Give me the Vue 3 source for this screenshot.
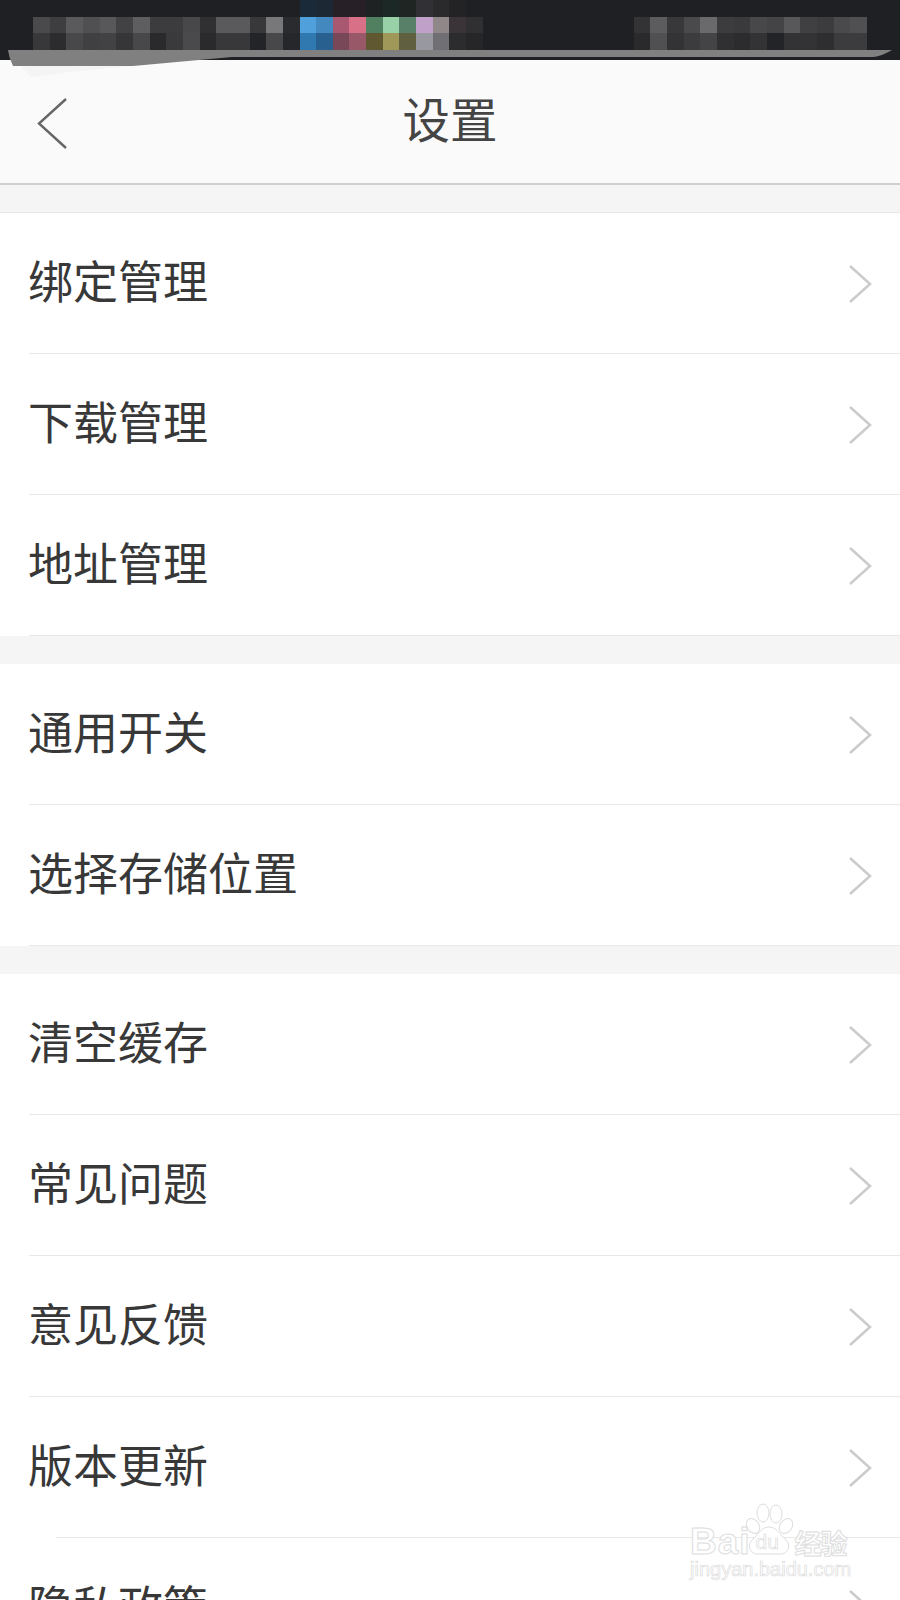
<template>
  <div class="page">
    <div class="status">
      <div class="mosaic left">
        <div v-for="(row, i) in leftBlocks" :key="i" class="mosaic-row">
          <i v-for="(c, j) in row" :key="j" :style="{ background: c }"></i>
        </div>
      </div>
      <div class="mosaic right">
        <div v-for="(row, i) in rightBlocks" :key="i" class="mosaic-row">
          <i v-for="(c, j) in row" :key="j" :style="{ background: c }"></i>
        </div>
      </div>
    </div>

    <header class="header">
      <svg class="back" width="34" height="56" viewBox="0 0 34 56">
        <path d="M30 3 L3 27.5 L30 52" fill="none" stroke="#666" stroke-width="2.4" />
      </svg>
      <h1>设置</h1>
    </header>

    <section v-for="(group, g) in groups" :key="g" class="group">
      <div v-for="item in group" :key="item" class="row" :class="{ short: item === '版本更新' }">
        <span>{{ item }}</span>
        <svg class="arrow" width="26" height="42" viewBox="0 0 26 42">
          <path d="M3 3 L23 21 L3 39" fill="none" stroke="#ccc" stroke-width="2.6" />
        </svg>
      </div>
    </section>

    <!-- torn edge of the screenshot, lies over status bar and header -->
    <svg class="torn" width="900" height="80" viewBox="0 0 900 80">
      <path d="M20 66 L133 66 L70 72 L32 77 Z" fill="#f4f4f4" />
      <path d="M8 50 L892 50 Q880 57 873 57 L232 57 L133 66 L13 66 Q9 58 8 50 Z" fill="#808080" />
    </svg>

    <div class="watermark">
      <svg class="paw" width="50" height="52" viewBox="0 0 50 52">
        <g fill="#fff" stroke="#ddd" stroke-width="1">
          <ellipse cx="9" cy="23" rx="6" ry="8" transform="rotate(-35 9 23)" />
          <ellipse cx="19" cy="10" rx="6" ry="9" />
          <ellipse cx="32" cy="11" rx="6" ry="9" />
          <ellipse cx="42" cy="23" rx="6" ry="8" transform="rotate(35 42 23)" />
          <path d="M25 24 C17 24 14 32 8 37 C2 43 7 52 15 51 L35 51 C43 52 48 43 42 37 C36 32 33 24 25 24 Z" />
        </g>
      </svg>
      <div class="mark-line">
        <span class="bai">Bai</span><span class="du">du</span><span class="jy">经验</span>
      </div>
      <div class="mark-url">jingyan.baidu.com</div>
    </div>
  </div>
</template>

<script setup>
const groups = [
  ['绑定管理', '下载管理', '地址管理'],
  ['通用开关', '选择存储位置'],
  ['清空缓存', '常见问题', '意见反馈', '版本更新', '隐私政策']
]

const base = '#1f2023'

const leftBlocks = [
  [base, base, base, base, base, base, base, base, base, base, base, base, base, base, base, base, '#1a2a38', '#1c2934', '#272026', '#272026', '#1e2222', '#1c2825', '#1e2523', '#313034', '#2a2a2c', '#232325', base],
  ['#4a4a4c', '#3e3e40', '#5a5a5c', '#505052', '#58585a', '#424244', '#5e5e60', '#3c3c3e', '#3c3c3e', '#48484a', '#303033', '#5a5a5c', '#5a5a5c', '#38383a', '#78787a', '#2a2b2f', '#50a0dc', '#4488c0', '#a85870', '#d87088', '#508060', '#98d0a8', '#588068', '#c0a0c8', '#908888', '#3a3438', '#302f32'],
  ['#38383a', '#2c2c2f', '#48484a', '#404042', '#424244', '#363638', '#48484a', '#2a2a2d', '#3a3a3c', '#4a4a4c', '#2a2a2d', '#38383a', '#38383a', '#232427', '#48484a', '#26272b', '#3078b0', '#28608f', '#784858', '#985868', '#605830', '#a09858', '#606040', '#9898a0', '#707074', '#2c2b2e', '#262629']
]

const rightBlocks = [
  [base, base, base, base, base, base, base, base, base, base, base, base, base, base],
  ['#333336', '#5c5c5e', '#38383a', '#4a4a4c', '#6a6a6c', '#3c3c3e', '#3a3a3c', '#48484a', '#444446', '#58585a', '#404042', '#3c3c3e', '#4a4a4c', '#505052'],
  ['#2a2a2d', '#505052', '#333336', '#3c3c3e', '#444446', '#303033', '#2c2c2f', '#333336', '#232427', '#333336', '#333336', '#2e2e30', '#3c3c3e', '#3c3c3e']
]
</script>

<style scoped>
.page {
  position: relative;
  height: 1600px;
  overflow: hidden;
  background: #f5f5f5;
  font-family: "Noto Sans CJK SC", "Liberation Sans", sans-serif;
}

.status {
  height: 60px;
  box-sizing: border-box;
  padding: 0 33px;
  display: flex;
  justify-content: space-between;
  background: #1f2023;
}

.mosaic-row {
  display: flex;
}

.mosaic-row i {
  display: block;
  width: 16.67px;
  height: 16.67px;
}

.header {
  position: relative;
  height: 125px;
  box-sizing: border-box;
  display: flex;
  align-items: center;
  justify-content: center;
  background: #fafafa;
  border-bottom: 2px solid #cfcfcf;
}

.header h1 {
  margin: 0 0 9px;
  font-size: 47.5px;
  font-weight: 400;
  color: #444;
}

.back {
  position: absolute;
  left: 36px;
  top: 36px;
}

.group {
  margin-top: 28px;
  background: #fff;
}

.group:nth-of-type(1) {
  margin-top: 27px;
  border-top: 1px solid #e8e8e8;
}

.row {
  position: relative;
  height: 141px;
  box-sizing: border-box;
  display: flex;
  align-items: center;
  justify-content: space-between;
  padding: 0 27px 0 28px;
  font-size: 45px;
  color: #383838;
}

.row span {
  margin-top: -8px;
}

.row::after {
  content: "";
  position: absolute;
  left: 29px;
  right: 0;
  bottom: 0;
  height: 1px;
  background: #e8e8e8;
}

.row.short::after {
  left: 56px;
}

.torn {
  position: absolute;
  left: 0;
  top: 0;
}

.watermark {
  position: absolute;
  left: 690px;
  top: 1503px;
  width: 170px;
  color: #fff;
}

.paw {
  position: absolute;
  left: 54px;
  top: 0;
}

.mark-line {
  position: relative;
  display: flex;
  align-items: center;
  height: 34px;
  margin-top: 22px;
  -webkit-text-stroke: 1px #ddd;
}

.bai {
  font-family: "Liberation Sans", sans-serif;
  font-size: 37px;
  font-weight: 700;
  letter-spacing: 1px;
}

.du {
  margin-left: 5px;
  width: 38px;
  font-family: "Liberation Sans", sans-serif;
  font-size: 21px;
  -webkit-text-stroke: 0.7px #ddd;
}

.jy {
  margin-left: 1px;
  font-size: 27px;
  font-weight: 700;
  letter-spacing: -1px;
}

.mark-url {
  margin-top: -1px;
  font-family: "Liberation Sans", sans-serif;
  font-size: 20px;
  white-space: nowrap;
  -webkit-text-stroke: 0.7px #ddd;
}
</style>

<style>
html, body {
  margin: 0;
  background: #fff;
}
</style>
